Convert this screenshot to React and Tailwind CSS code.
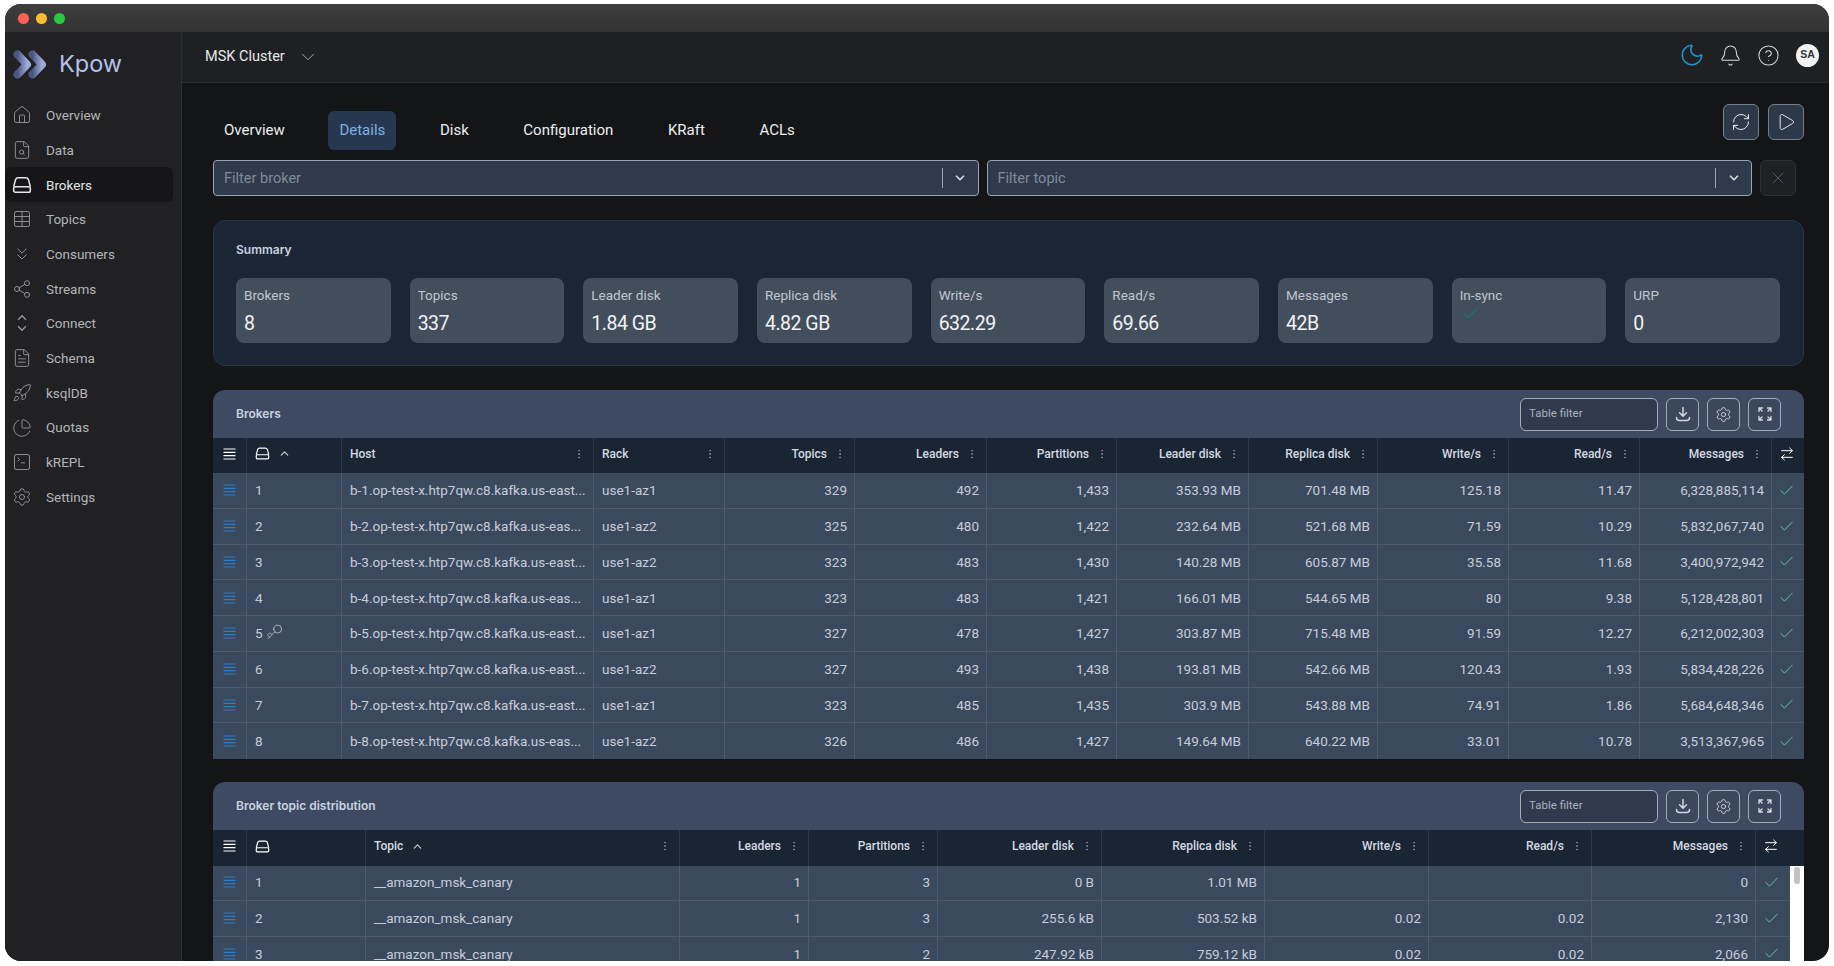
import {
  Home, FileSearch, Table, ChevronsDown, Share2, ChevronUp, ChevronDown, FileText, Rocket,
  PieChart, SquareTerminal, Settings, Moon, Bell, CircleHelp, RefreshCw, Play, X,
  ArrowRightLeft, Check, EllipsisVertical, Key,
} from "lucide-react";

const DriveIcon = ({ size = 17, className = "" }) => (
  <svg width={size} height={size} viewBox="0 0 18 18" fill="none" stroke="currentColor" strokeWidth="1.4" className={className}>
    <path d="M1.5 10.5 L3.2 4.2 C3.6 3 4.4 2.5 5.5 2.5 H12.5 C13.6 2.5 14.4 3 14.8 4.2 L16.5 10.5" />
    <rect x="1.5" y="10.5" width="15" height="5" rx="1.6" />
    <path d="M12.5 13h.01M14.5 13h.01" />
  </svg>
);

const ConnectIcon = ({ size = 17, className = "" }) => (
  <svg width={size} height={size} viewBox="0 0 18 18" fill="none" stroke="currentColor" strokeWidth="1.2" className={className}>
    <path d="M5.5 6 L9 2.5 L12.5 6" />
    <path d="M5.5 12 L9 15.5 L12.5 12" />
  </svg>
);

const TrayDownload = ({ size = 18 }) => (
  <svg width={size} height={size} viewBox="0 0 18 18" fill="none" stroke="currentColor" strokeWidth="1.5" strokeLinecap="round" strokeLinejoin="round">
    <path d="M9 2.5v8.5M5.5 7.8 L9 11.2 L12.5 7.8" />
    <path d="M2.5 12.5c0 2 1 3 3 3h7c2 0 3-1 3-3" />
  </svg>
);

const ExpandCorners = ({ size = 16 }) => (
  <svg width={size} height={size} viewBox="0 0 16 16" fill="none" stroke="currentColor" strokeWidth="1.3" strokeLinecap="round" strokeLinejoin="round">
    <path d="M2 5.5V2h3.5M2 2l3 3" />
    <path d="M14 5.5V2h-3.5M14 2l-3 3" />
    <path d="M2 10.5V14h3.5M2 14l3-3" />
    <path d="M14 10.5V14h-3.5M14 14l-3-3" />
  </svg>
);

const ToolGear = () => <Settings size={17} strokeWidth={1.3} />;

const Lines = ({ className = "" }) => (
  <svg width="13" height="12" viewBox="0 0 13 12" stroke="currentColor" strokeWidth="1.2" className={className}>
    <path d="M0.5 1h12M0.5 4.3h12M0.5 7.6h12M0.5 11h12" />
  </svg>
);

const Logo = () => (
  <svg width="35" height="29" viewBox="0 0 35 29" fill="none">
    <defs>
      <linearGradient id="kpowA" x1="0" y1="0" x2="1" y2="0">
        <stop offset="0" stopColor="#4a5580" />
        <stop offset="1" stopColor="#9eabdc" />
      </linearGradient>
    </defs>
    <path d="M4.5 4.5 L14 14.5 L4.5 24.5" stroke="url(#kpowA)" strokeWidth="8" strokeLinecap="round" strokeLinejoin="round" />
    <path d="M19.5 4.5 L29 14.5 L19.5 24.5" stroke="url(#kpowA)" strokeWidth="8" strokeLinecap="round" strokeLinejoin="round" />
  </svg>
);

const navItems = [
  { label: "Overview", icon: Home },
  { label: "Data", icon: FileSearch },
  { label: "Brokers", icon: DriveIcon, active: true },
  { label: "Topics", icon: Table },
  { label: "Consumers", icon: ChevronsDown },
  { label: "Streams", icon: Share2 },
  { label: "Connect", icon: ConnectIcon },
  { label: "Schema", icon: FileText },
  { label: "ksqlDB", icon: Rocket },
  { label: "Quotas", icon: PieChart },
  { label: "kREPL", icon: SquareTerminal },
  { label: "Settings", icon: Settings },
];

const tabs = ["Overview", "Details", "Disk", "Configuration", "KRaft", "ACLs"];

const stats = [
  ["Brokers", "8"],
  ["Topics", "337"],
  ["Leader disk", "1.84 GB"],
  ["Replica disk", "4.82 GB"],
  ["Write/s", "632.29"],
  ["Read/s", "69.66"],
  ["Messages", "42B"],
  ["In-sync", null],
  ["URP", "0"],
];

const brokerCols = ["Topics", "Leaders", "Partitions", "Leader disk", "Replica disk", "Write/s", "Read/s", "Messages"];

const brokers = [
  ["1", "b-1.op-test-x.htp7qw.c8.kafka.us-east...", "use1-az1", "329", "492", "1,433", "353.93 MB", "701.48 MB", "125.18", "11.47", "6,328,885,114"],
  ["2", "b-2.op-test-x.htp7qw.c8.kafka.us-eas...", "use1-az2", "325", "480", "1,422", "232.64 MB", "521.68 MB", "71.59", "10.29", "5,832,067,740"],
  ["3", "b-3.op-test-x.htp7qw.c8.kafka.us-east...", "use1-az2", "323", "483", "1,430", "140.28 MB", "605.87 MB", "35.58", "11.68", "3,400,972,942"],
  ["4", "b-4.op-test-x.htp7qw.c8.kafka.us-eas...", "use1-az1", "323", "483", "1,421", "166.01 MB", "544.65 MB", "80", "9.38", "5,128,428,801"],
  ["5", "b-5.op-test-x.htp7qw.c8.kafka.us-east...", "use1-az1", "327", "478", "1,427", "303.87 MB", "715.48 MB", "91.59", "12.27", "6,212,002,303"],
  ["6", "b-6.op-test-x.htp7qw.c8.kafka.us-east...", "use1-az2", "327", "493", "1,438", "193.81 MB", "542.66 MB", "120.43", "1.93", "5,834,428,226"],
  ["7", "b-7.op-test-x.htp7qw.c8.kafka.us-east...", "use1-az1", "323", "485", "1,435", "303.9 MB", "543.88 MB", "74.91", "1.86", "5,684,648,346"],
  ["8", "b-8.op-test-x.htp7qw.c8.kafka.us-eas...", "use1-az2", "326", "486", "1,427", "149.64 MB", "640.22 MB", "33.01", "10.78", "3,513,367,965"],
];

const topicCols = ["Leaders", "Partitions", "Leader disk", "Replica disk", "Write/s", "Read/s", "Messages"];

const topicRows = [
  ["1", "__amazon_msk_canary", "1", "3", "0 B", "1.01 MB", "", "", "0"],
  ["2", "__amazon_msk_canary", "1", "3", "255.6 kB", "503.52 kB", "0.02", "0.02", "2,130"],
  ["3", "__amazon_msk_canary", "1", "2", "247.92 kB", "759.12 kB", "0.02", "0.02", "2,066"],
];

const brokerGrid = "grid grid-cols-[34px_95px_252px_131px_130px_132px_130px_132px_129px_131px_131px_132px_32px]";
const topicHeadGrid = "grid grid-cols-[34px_119px_314px_129px_129px_164px_163px_164px_163px_164px_48px]";
const topicRowGrid = "grid grid-cols-[34px_119px_314px_129px_129px_164px_163px_164px_163px_164px_34px]";

const headCell = "flex items-center h-full pb-1 border-r border-[#2b3748] text-[12px] font-medium text-[#d3d9e1]";
const bodyCell = "flex items-center h-full border-r border-[#4d5a70] text-[13.5px] text-[#c6cdd8]";

const Dots = () => <EllipsisVertical size={12} strokeWidth={2} className="text-[#7f8a9a] shrink-0" />;

const HeadRight = ({ label }) => (
  <div className={`${headCell} justify-end pr-2`}>
    <span className="mr-[7px]">{label}</span>
    <Dots />
  </div>
);

const HeadLeft = ({ label, sorted }) => (
  <div className={`${headCell} justify-between pl-2 pr-2`}>
    <span className="flex items-center gap-2">
      {label}
      {sorted && <ChevronUp size={13} className="text-[#c9d0da]" />}
    </span>
    <Dots />
  </div>
);

const MenuHead = () => (
  <div className={`${headCell} justify-center`}>
    <Lines className="text-white" />
  </div>
);

const RowMenu = () => (
  <div className={`${bodyCell} justify-center`}>
    <Lines className="text-[#2a80c4]" />
  </div>
);

const RowCheck = () => (
  <div className="flex items-center justify-center h-full pr-1">
    <Check size={17} strokeWidth={1.4} className="text-[#62c0bb]" />
  </div>
);

const SwapHead = () => (
  <div className="flex items-center h-full pl-[7px] pb-1 text-white">
    <ArrowRightLeft size={16} strokeWidth={1.5} />
  </div>
);

const PanelHeader = ({ title }) => (
  <div className="flex items-center justify-between h-[48px] pl-[23px] pr-[23px]">
    <h2 className="font-['Inter',sans-serif] text-[12px] font-semibold text-[#c9d3e0]">{title}</h2>
    <div className="flex items-center gap-2">
      <div className="flex items-center w-[138px] h-[33px] pl-2 rounded-md border border-[#a2acb9] bg-[#2f3b4d] text-[11.5px] text-[#a8b1bd]">
        Table filter
      </div>
      {[TrayDownload, ToolGear, ExpandCorners].map((Icon, i) => (
        <div key={i} className="flex items-center justify-center w-[33px] h-[33px] rounded-md border border-[#a2acb9] bg-[#3a475c] text-[#d3d9e1]">
          <Icon />
        </div>
      ))}
    </div>
  </div>
);

export default function App() {
  return (
    <div className="w-[1834px] h-[966px] overflow-hidden bg-white pt-1 pl-[5px] pr-[5px] pb-[5px] font-['Roboto',sans-serif]">
      <div className="flex flex-col h-full overflow-hidden rounded-t-[16px] rounded-b-[16px] bg-[#141517]">
        {/* window chrome */}
        <div className="flex items-center gap-[7px] h-[28px] shrink-0 pl-[13px] bg-gradient-to-b from-[#3e3e3e] to-[#333334]">
          <span className="w-[11px] h-[11px] rounded-full bg-[#ff5f57]" />
          <span className="w-[11px] h-[11px] rounded-full bg-[#febc2e]" />
          <span className="w-[11px] h-[11px] rounded-full bg-[#28c840]" />
        </div>

        <div className="flex flex-1 min-h-0">
          {/* Sidebar */}
          <aside className="w-[177px] shrink-0 bg-[#212123] border-r border-[#2c2d2f]">
            <div className="flex items-center h-[66px] pl-2 pb-[2px] gap-[11px]">
              <Logo />
              <span className="font-['Inter',sans-serif] text-[23.5px] text-[#b5c1ea] leading-none">Kpow</span>
            </div>
            <nav className="mr-2">
              {navItems.map(({ label, icon: Icon, active }) => (
                <div
                  key={label}
                  className={`flex items-center gap-[14px] h-[34.7px] pl-[7px] rounded-md text-[13.5px] ${
                    active ? "bg-[#161618] text-[#e4e6e9]" : "text-[#b3b5b8]"
                  }`}
                >
                  <Icon size={20} strokeWidth={1.1} className={active ? "text-[#e4e6e9]" : "text-[#96989c]"} />
                  {label}
                </div>
              ))}
            </nav>
          </aside>

          <main className="flex flex-col flex-1 min-w-0 overflow-hidden">
            {/* Top bar */}
            <header className="flex items-center justify-between h-[51px] shrink-0 pl-[23px] pr-[10px] bg-[#1f2022] border-b border-[#2c2d2f]">
              <div className="flex items-center gap-[12px] text-[14.5px] text-[#e6e7e9]">
                MSK Cluster
                <ChevronDown size={22} strokeWidth={1} className="text-[#b0b2b5]" />
              </div>
              <div className="flex items-center gap-[15px] pb-1">
                <Moon size={26} strokeWidth={1.5} className="text-[#1c93cf] -mr-px" />
                <Bell size={23} strokeWidth={1.1} className="text-[#d5d6d8]" />
                <CircleHelp size={23} strokeWidth={1.1} className="text-[#d5d6d8] mr-px" />
                <div className="flex items-center justify-center w-[23px] h-[23px] rounded-full bg-[#f1f1f1] font-['Liberation_Sans',sans-serif] text-[10.5px] font-bold text-[#33363a]">
                  SA
                </div>
              </div>
            </header>

            <div className="flex-1 min-h-0 pl-[31px] pr-[25px] overflow-hidden">
              {/* Tabs */}
              <div className="flex justify-between h-[46px] mt-[21px] mb-[10px]">
                <div className="flex items-end gap-[32.6px]">
                  {tabs.map((tab) => (
                    <div
                      key={tab}
                      className={`flex items-center h-[39px] px-[11px] rounded-md text-[15px] ${
                        tab === "Details" ? "bg-[#263750] text-[#7eb0e2]" : "text-[#eceef0]"
                      }`}
                    >
                      {tab}
                    </div>
                  ))}
                </div>
                <div className="flex gap-[9px]">
                  <div className="flex items-center justify-center w-9 h-9 rounded-md border border-[#76818e] bg-[#2c3949] text-[#e5e8ec]">
                    <RefreshCw size={20} strokeWidth={1.2} />
                  </div>
                  <div className="flex items-center justify-center w-9 h-9 rounded-md border border-[#76818e] bg-[#2c3949] text-[#e5e8ec]">
                    <Play size={20} strokeWidth={1.2} />
                  </div>
                </div>
              </div>

              {/* Filters */}
              <div className="flex items-center gap-2 pr-2 mb-6">
                {["Filter broker", "Filter topic"].map((ph) => (
                  <div key={ph} className="flex flex-1 items-center h-9 pl-[10px] rounded-[4px] border border-[#9aa3ae] bg-[#2f3b4c]">
                    <span className="flex-1 pt-[2px] text-[14.5px] text-[#7f8a99]">{ph}</span>
                    <span className="w-px h-[20px] bg-[#9aa3ae]" />
                    <span className="flex justify-center w-[35px]">
                      <ChevronDown size={14} strokeWidth={3} className="text-[#d5d9de]" />
                    </span>
                  </div>
                ))}
                <div className="flex items-center justify-center w-9 h-9 shrink-0 rounded-md border border-[#2e3033] bg-[#1f2023]">
                  <X size={20} strokeWidth={1.1} className="text-[#5a5d61]" />
                </div>
              </div>

              {/* Summary */}
              <section className="h-[146px] mb-6 pl-[22px] pr-[23px] rounded-xl border border-[#2a3444] bg-[#1b2635]">
                <h2 className="flex items-center h-[57px] pt-px font-['Inter',sans-serif] text-[12px] font-semibold text-[#c9d3e0]">Summary</h2>
                <div className="grid grid-cols-9 gap-[19px]">
                  {stats.map(([label, value]) => (
                    <div key={label} className="h-[65px] pl-2 pt-2 rounded-lg bg-[#434e5d]">
                      <div className="text-[13.5px] leading-[18px] text-[#bfc6cf]">{label}</div>
                      {value ? (
                        <div className="mt-[7px] text-[19.5px] leading-[26px] tracking-[-0.5px] text-[#f0f2f4]">{value}</div>
                      ) : (
                        <Check size={19} strokeWidth={2.4} className="ml-[1px] text-[#1f6d66]" />
                      )}
                    </div>
                  ))}
                </div>
              </section>

              {/* Brokers table */}
              <section className="mb-[23px] rounded-t-xl bg-[#3d4a61] overflow-hidden">
                <PanelHeader title="Brokers" />
                <div className={`${brokerGrid} h-[35px] bg-[#1a2534]`}>
                  <MenuHead />
                  <div className={`${headCell} pl-2 gap-[8px]`}>
                    <DriveIcon size={15} className="text-white" />
                    <ChevronUp size={13} className="text-[#c9d0da]" />
                  </div>
                  <HeadLeft label="Host" />
                  <HeadLeft label="Rack" />
                  {brokerCols.map((c) => (
                    <HeadRight key={c} label={c} />
                  ))}
                  <SwapHead />
                </div>
                {brokers.map(([id, host, rack, ...nums]) => (
                  <div key={id} className={`${brokerGrid} h-[35.75px] border-b border-[#4d5a70] last:border-b-0 bg-[#3b495f]`}>
                    <RowMenu />
                    <div className={`${bodyCell} pl-2 gap-[3px]`}>
                      {id}
                      {id === "5" && <Key size={17} strokeWidth={1} className="-mt-1 rotate-180 text-[#d3d9e1]" />}
                    </div>
                    <div className={`${bodyCell} pl-2 whitespace-nowrap overflow-hidden`}>{host}</div>
                    <div className={`${bodyCell} pl-2`}>{rack}</div>
                    {nums.map((n, i) => (
                      <div key={i} className={`${bodyCell} justify-end pr-[7px]`}>{n}</div>
                    ))}
                    <RowCheck />
                  </div>
                ))}
              </section>

              {/* Broker topic distribution */}
              <section className="rounded-t-xl bg-[#3d4a61] overflow-hidden">
                <PanelHeader title="Broker topic distribution" />
                <div className={`${topicHeadGrid} h-[36px] bg-[#1a2534]`}>
                  <MenuHead />
                  <div className={`${headCell} pl-2`}>
                    <DriveIcon size={15} className="text-white" />
                  </div>
                  <HeadLeft label="Topic" sorted />
                  {topicCols.map((c) => (
                    <HeadRight key={c} label={c} />
                  ))}
                  <SwapHead />
                </div>
                <div className="flex h-[95px] overflow-hidden">
                  <div className="w-[1577px] shrink-0 -mt-px">
                    {topicRows.map(([id, topic, ...nums]) => (
                      <div key={id} className={`${topicRowGrid} h-[35.75px] border-b border-[#4d5a70] bg-[#3b495f]`}>
                        <RowMenu />
                        <div className={`${bodyCell} pl-2`}>{id}</div>
                        <div className={`${bodyCell} pl-2`}>{topic}</div>
                        {nums.map((n, i) => (
                          <div key={i} className={`${bodyCell} justify-end pr-[7px]`}>{n}</div>
                        ))}
                        <RowCheck />
                      </div>
                    ))}
                  </div>
                  <div className="flex-1 bg-white px-[4px] pt-px">
                    <div className="h-[17px] rounded-full bg-[#c2c2c2]" />
                  </div>
                </div>
              </section>
            </div>
          </main>
        </div>
      </div>
    </div>
  );
}
